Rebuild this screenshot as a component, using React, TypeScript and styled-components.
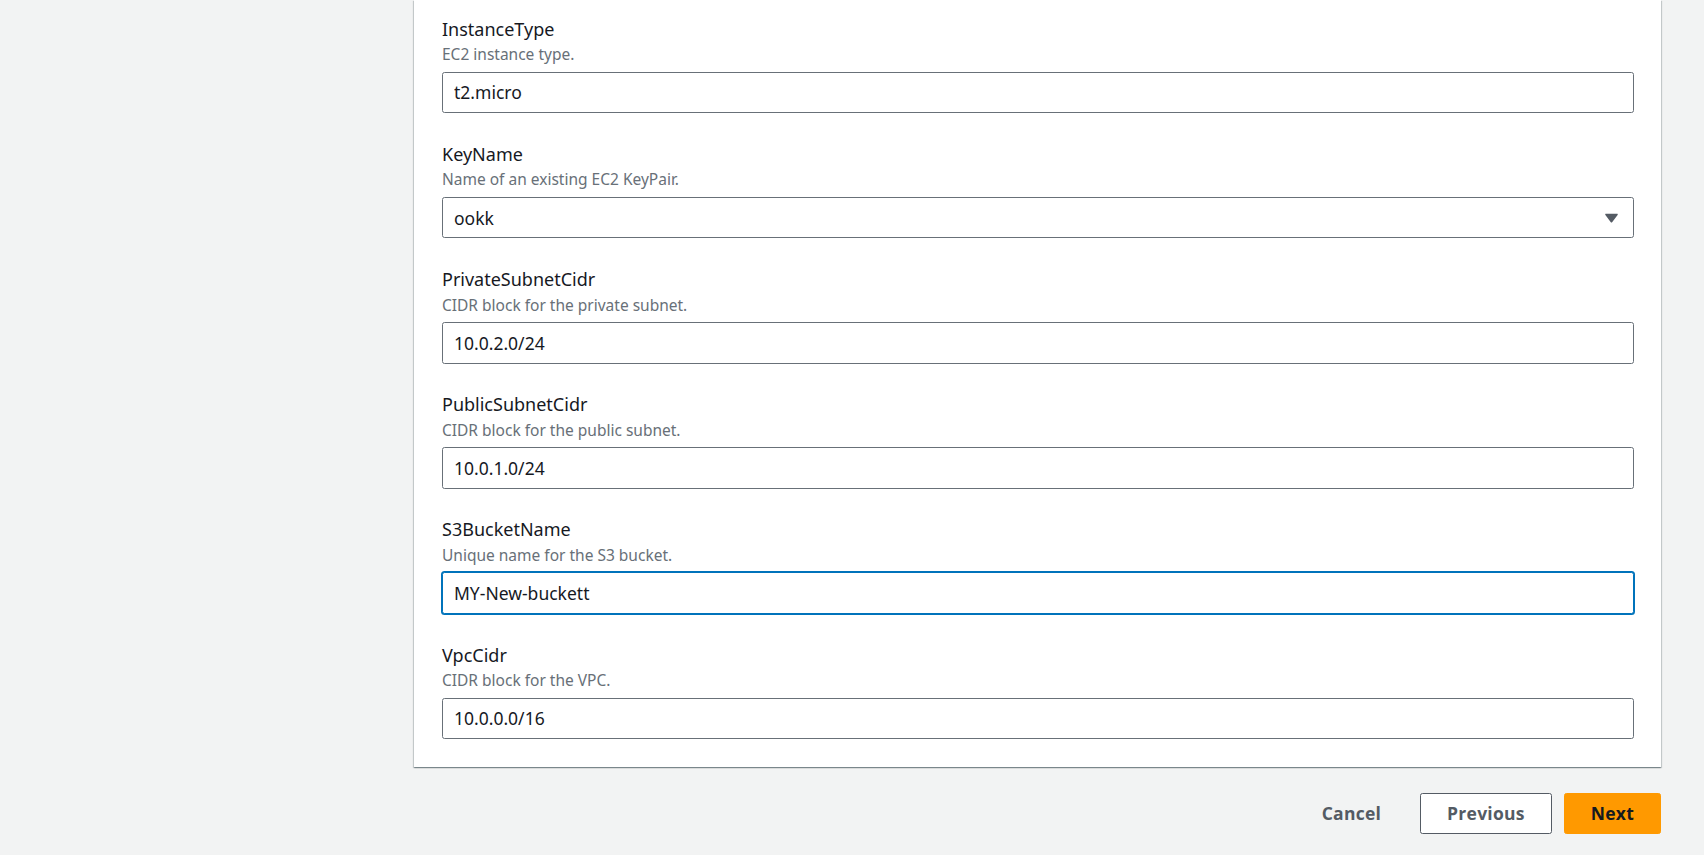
import React from "react";
import styled, { createGlobalStyle, css } from "styled-components";

interface Iparam {
  name: string;
  description: string;
  value: string;
  kind?: "input" | "select";
  focused?: boolean;
}

const params: Iparam[] = [
  { name: "InstanceType", description: "EC2 instance type.", value: "t2.micro" },
  {
    name: "KeyName",
    description: "Name of an existing EC2 KeyPair.",
    value: "ookk",
    kind: "select",
  },
  {
    name: "PrivateSubnetCidr",
    description: "CIDR block for the private subnet.",
    value: "10.0.2.0/24",
  },
  {
    name: "PublicSubnetCidr",
    description: "CIDR block for the public subnet.",
    value: "10.0.1.0/24",
  },
  {
    name: "S3BucketName",
    description: "Unique name for the S3 bucket.",
    value: "MY-New-buckett",
    focused: true,
  },
  { name: "VpcCidr", description: "CIDR block for the VPC.", value: "10.0.0.0/16" },
];

const CaretDown = () => (
  <svg width="13" height="10" viewBox="0 0 13 10" aria-hidden="true">
    <path d="M1 0.8h11c0.7 0 1 0.6 0.6 1.1L7.1 9.3c-0.3 0.4-1 0.4-1.3 0L0.4 1.9C0 1.4 0.3 0.8 1 0.8z" fill="#545b64" />
  </svg>
);

const Field = ({ param }: { param: Iparam }) => (
  <FieldWrapper>
    <Label>{param.name}</Label>
    <Description>{param.description}</Description>
    <Control>
      {param.kind === "select" ? (
        <SelectBox>
          <span>{param.value}</span>
          <CaretDown />
        </SelectBox>
      ) : (
        <Input readOnly value={param.value} $focused={param.focused} />
      )}
    </Control>
  </FieldWrapper>
);

const App = () => {
  return (
    <>
      <GlobalStyle />
      <Page>
        <Main>
          <Card>
            <Fields>
              {params.map((p) => (
                <Field key={p.name} param={p} />
              ))}
            </Fields>
          </Card>
          <Actions>
            <LinkButton>Cancel</LinkButton>
            <Button>Previous</Button>
            <Button $primary>Next</Button>
          </Actions>
        </Main>
      </Page>
    </>
  );
};

const GlobalStyle = createGlobalStyle`
  html, body {
    margin: 0;
    padding: 0;
    background: #f2f3f3;
    font-family: "Noto Sans", "Open Sans", Roboto, Arial, sans-serif;
    color: #16191f;
  }
`;

const Page = styled.div`
  width: 1704px;
  height: 855px;
  overflow: hidden;
  box-sizing: border-box;
  padding: 0 43px 0 414px;
`;

const Main = styled.main`
  display: flex;
  flex-direction: column;
`;

const Card = styled.section`
  background: #fff;
  padding: 16.7px 27px 27.8px 28px;
  box-shadow: 0 1px 1px 0 rgba(0, 28, 36, 0.3),
    1px 1px 1px 0 rgba(0, 28, 36, 0.15), -1px 1px 1px 0 rgba(0, 28, 36, 0.15);
`;

const Fields = styled.div`
  display: flex;
  flex-direction: column;
  gap: 28.7px;
`;

const FieldWrapper = styled.div`
  display: flex;
  flex-direction: column;
`;

const Label = styled.div`
  font-size: 18px;
  line-height: 25px;
  color: #16191f;
`;

const Description = styled.div`
  margin-top: 2.5px;
  font-size: 15.5px;
  line-height: 20px;
  color: #687078;
`;

const Control = styled.div`
  margin-top: 7.5px;
`;

const boxStyle = css`
  box-sizing: border-box;
  width: 100%;
  height: 41.5px;
  padding: 0 11px;
  border: 1px solid #687078;
  border-radius: 2.5px;
  background: #fff;
  font-family: inherit;
  font-size: 17.5px;
  color: #16191f;
`;

const Input = styled.input<{ $focused?: boolean }>`
  ${boxStyle};
  display: block;
  outline: none;
  ${({ $focused }) =>
    $focused &&
    css`
      border-color: #0073bb;
      box-shadow: 0 0 0 1px #0073bb;
    `}
`;

const SelectBox = styled.div`
  ${boxStyle};
  display: flex;
  align-items: center;
  justify-content: space-between;
  padding-right: 15px;
`;

const Actions = styled.div`
  display: flex;
  justify-content: flex-end;
  align-items: center;
  gap: 12px;
  margin-top: 26px;
`;

const Button = styled.button<{ $primary?: boolean }>`
  box-sizing: border-box;
  height: 41px;
  padding: 0 26px;
  border-radius: 2.5px;
  font-family: "Open Sans", "Noto Sans", Arial, sans-serif;
  font-size: 17.5px;
  font-weight: 700;
  letter-spacing: 0.25px;
  cursor: pointer;
  border: 1px solid ${({ $primary }) => ($primary ? "#ff9900" : "#545b64")};
  background: ${({ $primary }) => ($primary ? "#ff9900" : "#fff")};
  color: ${({ $primary }) => ($primary ? "#16191f" : "#545b64")};
`;

const LinkButton = styled.button`
  height: 41px;
  padding: 0 25px;
  margin-right: 2px;
  border: none;
  background: none;
  font-family: "Open Sans", "Noto Sans", Arial, sans-serif;
  font-size: 17.5px;
  font-weight: 700;
  letter-spacing: 0.25px;
  color: #545b64;
  cursor: pointer;
`;

export default App;
